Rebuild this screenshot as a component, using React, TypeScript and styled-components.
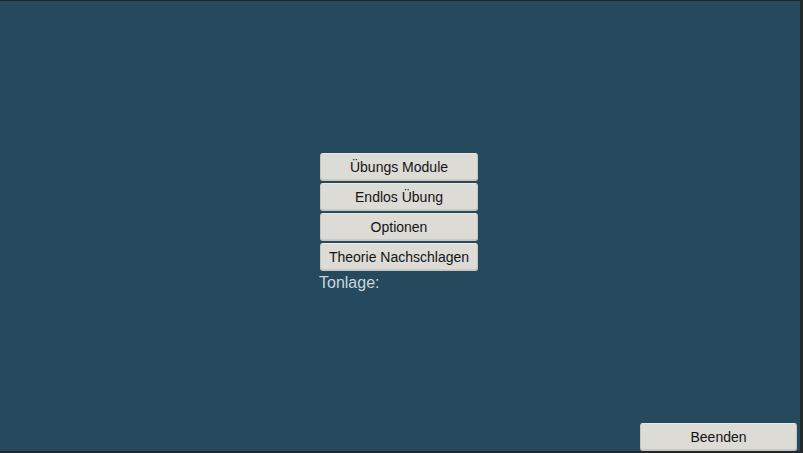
import React from "react";
import styled, { createGlobalStyle } from "styled-components";

const Global = createGlobalStyle`
  html, body { margin: 0; padding: 0; background: #254a5d; }
  * { box-sizing: border-box; }
`;

const Screen = styled.div`
  width: 803px;
  height: 453px;
  background: #254a5d;
  border-top: 1px solid #1f2526;
  border-right: 3px solid #22282a;
  border-bottom: 2px solid #22282a;
  display: flex;
  flex-direction: column;
  font-family: "Liberation Sans", Arial, sans-serif;
`;

const Menu = styled.div`
  margin-top: 152px;
  margin-left: 320px;
  width: 158px;
  display: flex;
  flex-direction: column;
  gap: 2px;
`;

const Button = styled.button<{ $wide?: boolean }>`
  height: 28px;
  width: ${(p) => (p.$wide ? "157px" : "158px")};
  background: #dcdbd5;
  border: 1px solid #c5c4bf;
  border-top-color: #e9e8e3;
  border-radius: 3px;
  color: #141414;
  font-family: "Liberation Sans", Arial, sans-serif;
  font-size: 14px;
  padding: 0;
  display: flex;
  align-items: center;
  justify-content: center;
  box-shadow: inset 0 -1px 0 #c9c8c2;
`;

const Label = styled.div`
  color: #c9d6dd;
  font-size: 16px;
  margin-top: 0;
  margin-left: -1px;
  line-height: 20px;
`;

const Footer = styled.div`
  margin-top: auto;
  display: flex;
  justify-content: flex-end;
  padding-right: 3px;
  padding-bottom: 0;
`;

export default function App() {
  return (
    <>
      <Global />
      <Screen>
        <Menu>
          <Button>Übungs Module</Button>
          <Button>Endlos Übung</Button>
          <Button>Optionen</Button>
          <Button>Theorie Nachschlagen</Button>
          <Label>Tonlage:</Label>
        </Menu>
        <Footer>
          <Button $wide>Beenden</Button>
        </Footer>
      </Screen>
    </>
  );
}
